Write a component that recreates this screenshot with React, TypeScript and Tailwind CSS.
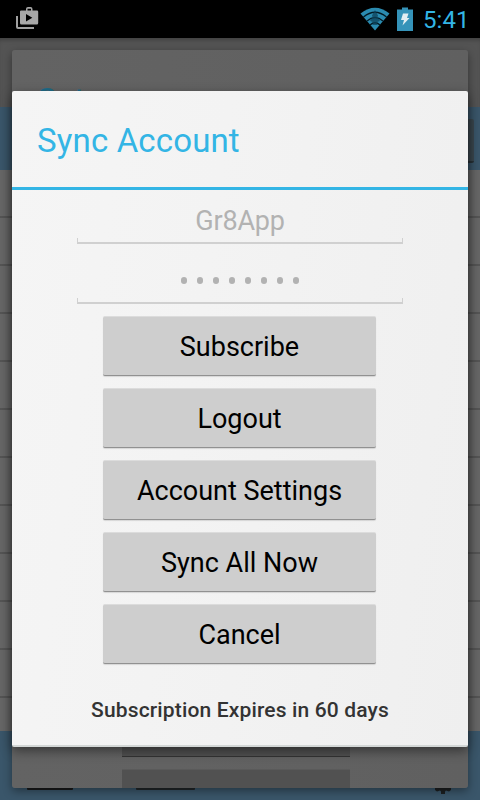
const actions = [
  "Subscribe",
  "Logout",
  "Account Settings",
  "Sync All Now",
  "Cancel",
];

function StatusBar() {
  return (
    <header className="relative z-10 h-[38px] bg-black flex items-center justify-between pl-[15px] pr-[11px]">
      <svg width="25" height="25" viewBox="0 0 25 25" className="-mt-px">
        <path d="M2 10v11a1 1 0 0 0 1 1h16" fill="none" stroke="#a0a0a0" strokeWidth="2" />
        <path
          fillRule="evenodd"
          fill="#a8a8a8"
          d="M6 4.500h5V3a2 2 0 0 1 2-2h2.500a2 2 0 0 1 2 2v1.500h4.500a1.200 1.200 0 0 1 1.200 1.200V17a1.500 1.500 0 0 1-1.500 1.500H6.500A1.500 1.500 0 0 1 5 17V5.500a1 1 0 0 1 1-1zM12.500 2.700v1.800h3.500V2.700zM11 8v7.500l6.300-3.800z"
        />
      </svg>
      <div className="flex items-center">
        <svg width="30" height="24" viewBox="0 0 30 24">
          <path d="M.5 6.500Q15-5 29.500 6.500L15 23.500z" fill="#2b8bb0" />
          <g fill="none" stroke="#031a24" strokeWidth="1.300">
            <path d="M3.500 10Q15 .5 26.500 10" />
            <path d="M7 14Q15 7 23 14" />
            <path d="M10 18Q15 13.500 20 18" />
          </g>
          <path d="M15 3l3 5.500-.5 1.500 2.500 4-3 1 .5 3h-5l.5-3-3-1 2.500-4-.5-1.500z" fill="#0d4259" opacity=".75" />
        </svg>
        <svg width="16" height="24" viewBox="0 0 16 24" className="ml-[7px]">
          <path d="M5 .5h6v2h5V24H0V2.500h5z" fill="#3593b9" />
          <path d="M6 6.500h5.500l-1.500 4.500h2.500L5.500 18.500l1.500-5.500H4z" fill="#e3eef2" />
        </svg>
        <span className="ml-[10px] w-[46px] pt-[2px] text-[24px] leading-none tracking-[0.1px] text-[#33b5e5]">5:41</span>
      </div>
    </header>
  );
}

/* The list screen, dimmed behind both dialogs */
function ListScreen() {
  return (
    <div className="flex flex-col h-[762px] bg-[#666]">
      <div className="h-[69px] bg-[#545454] shadow-[inset_0_4px_4px_-2px_rgba(0,0,0,0.25)]" />
      <div className="h-[63px] bg-[#3a566a] flex justify-end items-center pt-[5px] pr-[6px]">
        <div className="w-[80px] h-[44px] rounded-[2px] bg-[#3b4850] border-b-2 border-[#283238]" />
      </div>
      <div className="h-[561px]">
        {Array.from({ length: 11 }, (_, i) => (
          <div key={i} className="h-12 border-b-2 border-[#545454]" />
        ))}
      </div>
      <div className="grow bg-[#3a566a] flex items-end justify-between pl-[27px] pr-[29px] pb-[6px]">
        <div className="flex items-end gap-[63px]">
          <div className="w-[46px] h-[14px] bg-[#181a1b] rounded-[1px] mb-[4px]" />
          <div className="w-[59px] h-[14px] bg-[#202629] rounded-[1px] mb-[4px]" />
        </div>
        <svg width="16" height="24" viewBox="0 0 16 24" fill="#1c1f20">
          <path d="M0 17h16v3l-2 1.500-3-1-1 1V24H6v-2.500l-1-1-3 1L0 20z" />
        </svg>
      </div>
    </div>
  );
}

function SetupDialog() {
  return (
    <section className="absolute left-3 top-[50px] w-[456px] h-[738px] rounded-[3px] bg-gradient-to-r from-[#636363] to-[#606060] shadow-[0_3px_10px_rgba(0,0,0,0.4)] flex flex-col justify-between overflow-hidden">
      <h2 className="pt-[32px] pl-[25px] text-[33px] leading-[38px] tracking-[0.1px] text-[#1e6c89]">Setup</h2>
      <div className="flex flex-col gap-3 pl-[110px]">
        <div className="w-[228px] h-[59px] bg-[#515151] border-b border-[#333]" />
        <div className="w-[228px] h-[19px] bg-[#515151] border-t border-[#5a5a5a]" />
      </div>
    </section>
  );
}

function Field({ children }: { children: React.ReactNode }) {
  return (
    <div className="w-[326px] flex flex-col">
      <div className="h-[42px] flex items-center justify-center text-[#b2b2b2]">{children}</div>
      <div className="h-[6px] border border-t-0 border-b-2 border-[#d0d0d0]" />
    </div>
  );
}

function SyncDialog() {
  return (
    <section className="absolute left-3 top-[91px] w-[456px] h-[656px] rounded-[2px] bg-[linear-gradient(98deg,#f5f5f5,#f3f3f3_40%,#efefef)] border-b-2 border-[#d3d7d6] shadow-[0_4px_12px_rgba(0,0,0,0.45)] flex flex-col items-center">
      <h1 className="w-full h-[99px] border-b-[3px] border-[#33b5e5] pl-[25px] pt-[4px] flex items-center text-[33px] tracking-[0.15px] text-[#33b5e5]">
        Sync Account
      </h1>
      <div className="mt-[6px] flex flex-col gap-3">
        <Field>
          <span className="mt-[9px] text-[27px] tracking-[-0.2px]">Gr8App</span>
        </Field>
        <Field>
          <span className="flex gap-[10px] mt-[6px]">
            {Array.from({ length: 8 }, (_, i) => (
              <span key={i} className="w-[6px] h-[7px] rounded-full bg-[#b2b2b2]" />
            ))}
          </span>
        </Field>
      </div>
      <div className="mt-[12px] mr-px flex flex-col gap-3">
        {actions.map((label) => (
          <button
            key={label}
            className="w-[273px] h-[60px] pt-[2px] rounded-[2px] bg-[#cecece] border-t border-b border-t-[#dcdcdc] border-b-[#919191] shadow-[0_1px_1px_rgba(0,0,0,0.12)] text-[27px] text-black"
          >
            {label}
          </button>
        ))}
      </div>
      <p className="mt-[34px] text-[21px] leading-[24px] font-medium tracking-[0.15px] text-[#333]">
        Subscription Expires in 60 days
      </p>
    </section>
  );
}

export default function App() {
  return (
    <div className="relative w-[480px] h-[800px] overflow-hidden font-['Roboto',sans-serif]">
      <StatusBar />
      <ListScreen />
      <SetupDialog />
      <SyncDialog />
    </div>
  );
}
